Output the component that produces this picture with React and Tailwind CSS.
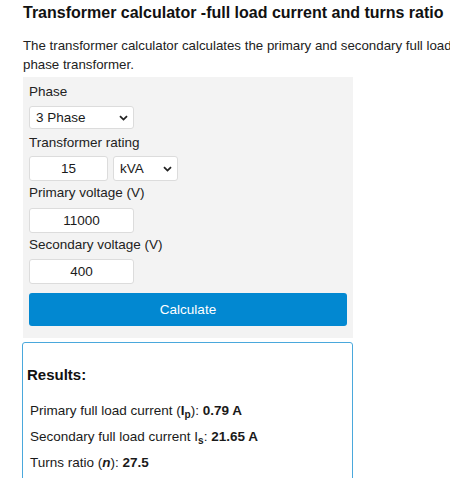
import { useState } from 'react'

function Chevron() {
  return (
    <svg width="9" height="6" viewBox="0 0 9 6" className="pointer-events-none absolute right-[6px] top-1/2 -translate-y-1/2">
      <path d="M1 1.2 L4.5 4.6 L8 1.2" fill="none" stroke="#222" strokeWidth="1.8" />
    </svg>
  )
}

function Select({ value, options, className }) {
  return (
    <div className={`relative ${className}`}>
      <select
        defaultValue={value}
        className="w-full h-full appearance-none bg-white border border-[#dcdcdc] rounded-[3px] pl-[6px] pr-5 text-[13.5px] text-[#1a1a1a] outline-none"
      >
        {options.map((o) => (
          <option key={o}>{o}</option>
        ))}
      </select>
      <Chevron />
    </div>
  )
}

function Field({ value, className }) {
  return (
    <input
      defaultValue={value}
      className={`bg-white border border-[#dcdcdc] rounded-[3px] text-center text-[13.5px] text-[#1a1a1a] outline-none ${className}`}
    />
  )
}

export default function App() {
  const [res] = useState({ ip: '0.79 A', is: '21.65 A', n: '27.5' })

  return (
    <div className="w-[450px] h-[478px] overflow-hidden bg-white text-[#222] font-['Liberation_Sans',Arial,sans-serif]">
      <div className="pl-[23px]">
        <h1 className="pt-[3px] text-[16px] leading-[20px] font-bold text-[#111] whitespace-nowrap">
          Transformer calculator -full load current and turns ratio
        </h1>
        <p className="mt-[13px] w-[600px] text-[13.3px] leading-[19px] text-[#222]">
          The transformer calculator calculates the primary and secondary full load current of a single or three phase transformer.
        </p>

        <div className="mt-[3px] w-[330px] bg-[#f3f3f3] pt-[5px] pb-[12px] px-[6px] flex flex-col text-[13.5px] leading-[19px] text-[#222]">
          <label>Phase</label>
          <Select value="3 Phase" options={['1 Phase', '3 Phase']} className="mt-[5px] w-[105px] h-[23px]" />

          <label className="mt-[4px]">Transformer rating</label>
          <div className="mt-[4px] flex gap-[5px]">
            <Field value="15" className="w-[79px] h-[25px]" />
            <Select value="kVA" options={['VA', 'kVA', 'MVA']} className="w-[65px] h-[25px]" />
          </div>

          <label className="mt-[2px]">Primary voltage (V)</label>
          <Field value="11000" className="mt-[6px] w-[105px] h-[25px]" />

          <label className="mt-[2px]">Secondary voltage (V)</label>
          <Field value="400" className="mt-[5px] w-[105px] h-[25px]" />

          <button className="mt-[9px] h-[33px] w-[318px] bg-[#0288d1] rounded-[3px] text-white text-[13.5px]">
            Calculate
          </button>
        </div>

        <div className="mt-[4px] -ml-[1px] w-[331px] h-[160px] border border-[#4aa8dc] rounded-[3px] pl-[4px] pt-[22px] text-[#1a1a1a]">
          <h2 className="text-[15px] leading-[20px] font-bold text-[#111]">Results:</h2>
          <div className="mt-[16px] pl-[3px] flex flex-col gap-[6px] text-[13.5px] leading-[20px]">
            <div>
              Primary full load current (<b>I<sub>p</sub></b>): <b>{res.ip}</b>
            </div>
            <div>
              Secondary full load current I<sub className="font-bold">s</sub>: <b>{res.is}</b>
            </div>
            <div>
              Turns ratio (<b><i>n</i></b>): <b>{res.n}</b>
            </div>
          </div>
        </div>
      </div>
    </div>
  )
}
